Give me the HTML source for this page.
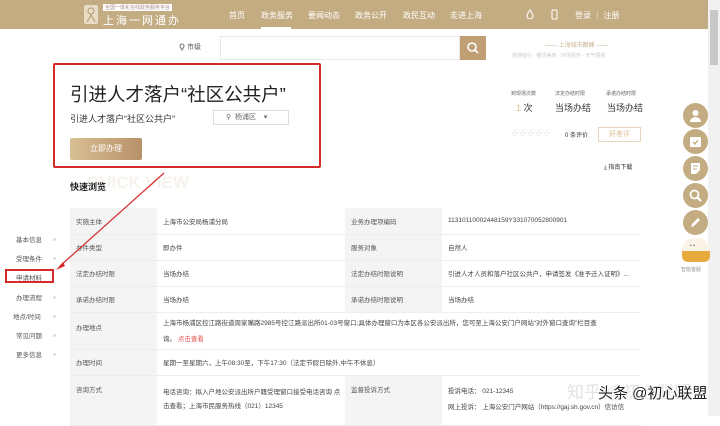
<!DOCTYPE html>
<html><head><meta charset="utf-8"><style>
*{margin:0;padding:0;box-sizing:border-box}
body{width:720px;height:416px;overflow:hidden;background:#fff;font-family:"Liberation Sans","Noto Sans CJK SC",sans-serif;color:#333;position:relative}
.a{position:absolute;white-space:nowrap}
.hdr{left:0;top:0;width:708px;height:29px;background:#c4ac82}
.nav{color:#fff;font-size:8px;top:10px}
table{border-collapse:collapse;position:absolute;left:70px;top:208px;font-size:6.5px;color:#444}
td{border-bottom:1px solid #eee;padding:0 0 0 6px;vertical-align:middle}
td.l{background:#f4f4f4;color:#555}
.circ{position:absolute;left:683px;width:25px;height:25px;border-radius:50%;background:#c4ac82}
.circ svg{position:absolute;left:6px;top:6px}
.ln{font-size:6.5px;color:#555;left:16px}
.dot{left:53px;width:3px;height:3px;border-radius:50%;background:#ddd}
</style></head><body>
<div class="a hdr"></div>
<div class="a" style="left:84px;top:5px;width:14px;height:19px;background:#e8dcc6;border-radius:2px"><svg width="14" height="19"><circle cx="7" cy="6" r="3" fill="none" stroke="#b39a70"/><path d="M3 17 L7 10 L11 17" fill="none" stroke="#b39a70"/></svg></div>
<div class="a" style="left:103px;top:4px;font-size:5px;background:#fff;color:#a88;padding:0 2px">全国一体化在线政务服务平台</div>
<div class="a" style="left:103px;top:12px;font-size:11px;color:#fff;letter-spacing:2px">上海一网通办</div>
<div class="a nav" style="left:229px">首页</div>
<div class="a nav" style="left:261px">政务服务</div>
<div class="a" style="left:261px;top:27px;width:30px;height:2px;background:#fff"></div>
<div class="a nav" style="left:308px">要闻动态</div>
<div class="a nav" style="left:355px">政务公开</div>
<div class="a nav" style="left:403px">政民互动</div>
<div class="a nav" style="left:450px">走进上海</div>
<svg class="a" style="left:526px;top:9px" width="8" height="10"><path d="M4 1 C2 4 1 5 1 7 A3 3 0 0 0 7 7 C7 5 6 4 4 1Z" fill="none" stroke="#fff"/></svg>
<svg class="a" style="left:551px;top:9px" width="7" height="11"><rect x="1" y="1" width="5" height="9" rx="1" fill="none" stroke="#fff"/></svg>
<div class="a nav" style="left:575px">登录 ｜ 注册</div>
<div class="a" style="left:708px;top:0;width:12px;height:416px;background:#f1f1f1"></div>
<div class="a" style="left:710px;top:10px;width:8px;height:55px;background:#c8c8c8"></div>
<svg class="a" style="left:179px;top:43px" width="6" height="8"><path d="M3 7 C1 4 1 3 1 3 A2 2 0 0 1 5 3 C5 3 5 4 3 7Z" fill="none" stroke="#777"/></svg>
<div class="a" style="left:187px;top:42px;font-size:7px;color:#555">市级</div>
<div class="a" style="left:220px;top:36px;width:240px;height:24px;border:1px solid #e8e8e8"></div>
<div class="a" style="left:460px;top:36px;width:26px;height:24px;background:#c09f75"><svg width="26" height="24"><circle cx="12" cy="11" r="4" fill="none" stroke="#fff" stroke-width="1.6"/><line x1="15" y1="14" x2="18" y2="17" stroke="#fff" stroke-width="1.6"/></svg></div>
<div class="a" style="left:545px;top:40px;font-size:6px;color:#c8b28c">—— 上海城市巅峰 ——</div>
<div class="a" style="left:512px;top:52px;font-size:5px;color:#ccc">旅游指引 · 餐饮美食 · 环境服务 · 天气预报</div>
<div class="a" style="left:53px;top:63px;width:268px;height:105px;border:2px solid #d42a2a;border-radius:2px"></div>
<div class="a" style="left:70px;top:81px;font-size:18.5px;color:#222">引进人才落户“社区公共户”</div>
<div class="a" style="left:70px;top:112px;font-size:9px;color:#333">引进人才落户“社区公共户”</div>
<div class="a" style="left:213px;top:110px;width:76px;height:15px;border:1px solid #ddd;font-size:7px;color:#666;line-height:13px;padding-left:12px">⚲ &nbsp;杨浦区 &nbsp;&nbsp;&nbsp;▾</div>
<div class="a" style="left:70px;top:138px;width:72px;height:22px;background:linear-gradient(90deg,#d9bf95,#b8916a);border-radius:2px;color:#fff;font-size:8px;text-align:center;line-height:22px">立即办理</div>
<div class="a" style="left:86px;top:173px;font-size:17px;color:#f6f2ec;font-weight:bold">QUICK VIEW</div>
<div class="a" style="left:70px;top:180px;font-size:9px;color:#222;font-weight:bold">快速浏览</div>
<div class="a" style="left:511px;top:90px;font-size:5px;color:#666">到现场次数</div>
<div class="a" style="left:555px;top:90px;font-size:5px;color:#666">法定办结时限</div>
<div class="a" style="left:606px;top:90px;font-size:5px;color:#666">承诺办结时限</div>
<div class="a" style="left:516px;top:101px;font-size:9px;color:#333"><span style="color:#d9bf95">1</span> 次</div>
<div class="a" style="left:555px;top:101px;font-size:9px;color:#333">当场办结</div>
<div class="a" style="left:607px;top:101px;font-size:9px;color:#333">当场办结</div>
<div class="a" style="left:511px;top:128px;font-size:8px;color:#ddd">☆☆☆☆☆</div>
<div class="a" style="left:565px;top:130px;font-size:6px;color:#333">0 条评价</div>
<div class="a" style="left:598px;top:127px;width:43px;height:15px;border:1px solid #e3d5bd;font-size:7px;color:#d9bf95;text-align:center;line-height:13px">好差评</div>
<div class="a" style="left:604px;top:162px;font-size:6px;color:#333">⤓ 指南下载</div>
<table style="width:571px">
<tr style="height:26px"><td class="l" style="width:87px">实施主体</td><td style="width:188px">上海市公安局杨浦分局</td><td class="l" style="width:97px">业务办理项编码</td><td>11310110002448159Y331070052800901</td></tr>
<tr style="height:26px"><td class="l">办件类型</td><td>即办件</td><td class="l">服务对象</td><td>自然人</td></tr>
<tr style="height:26px"><td class="l">法定办结时限</td><td>当场办结</td><td class="l">法定办结时限说明</td><td>引进人才人员和落户社区公共户，申请签发《准予迁入证明》...</td></tr>
<tr style="height:26px"><td class="l">承诺办结时限</td><td>当场办结</td><td class="l">承诺办结时限说明</td><td>当场办结</td></tr>
<tr style="height:37px"><td class="l" style="vertical-align:top;padding-top:9px">办理地点</td><td colspan="3" style="line-height:16px;padding-top:2px">上海市杨浦区控江路街道周家嘴路2985号控江路派出所01-03号窗口;具体办理窗口为本区各公安派出所，您可至上海公安门户网站“对外窗口查询”栏目查<br>询。 <span style="color:#e05050">点击查看</span></td></tr>
<tr style="height:26px"><td class="l">办理时间</td><td colspan="3">星期一至星期六，上午08:30至，下午17:30（法定节假日除外,中午不休息）</td></tr>
<tr style="height:50px"><td class="l" style="vertical-align:top;padding-top:8px">咨询方式</td><td style="line-height:14px">电话咨询：拟入户地公安派出所户籍受理窗口接受电话咨询 点<br>击查看；上海市民服务热线（021）12345</td><td class="l" style="vertical-align:top;padding-top:8px">监督投诉方式</td><td style="line-height:16px">投诉电话： 021-12345<br>网上投诉： 上海公安门户网站（https://gaj.sh.gov.cn）信访信</td></tr>
</table>
<div class="a ln" style="top:234px">基本信息</div><div class="a dot" style="top:238px"></div>
<div class="a ln" style="top:253px">受理条件</div><div class="a dot" style="top:257px"></div>
<div class="a" style="left:5px;top:269px;width:49px;height:14px;border:2px solid #d42a2a"></div>
<div class="a ln" style="top:272px">申请材料</div>
<div class="a ln" style="top:292px">办理流程</div><div class="a dot" style="top:296px"></div>
<div class="a" style="left:13px;top:311px;font-size:6.5px;color:#555">地点/时间</div><div class="a dot" style="top:315px"></div>
<div class="a ln" style="top:330px">常见问题</div><div class="a dot" style="top:334px"></div>
<div class="a ln" style="top:349px">更多信息</div><div class="a dot" style="top:353px"></div>
<svg class="a" style="left:0;top:0" width="720" height="416"><line x1="164" y1="173" x2="60" y2="266" stroke="#d42a2a" stroke-width="1.2"/><polygon points="56,270 63,262 65,266" fill="#d42a2a"/></svg>
<div class="circ" style="top:103px"><svg width="13" height="13"><circle cx="6.5" cy="4" r="3" fill="#fff"/><path d="M1 13 A5.5 5 0 0 1 12 13Z" fill="#fff"/></svg></div>
<div class="circ" style="top:129px"><svg width="13" height="13"><rect x="1" y="2" width="11" height="10" rx="1" fill="#fff"/><path d="M4 7 L6 9 L9 5" stroke="#c4ac82" fill="none" stroke-width="1.3"/></svg></div>
<div class="circ" style="top:156px"><svg width="13" height="13"><path d="M2 1 H11 V8 L7 12 H2Z" fill="#fff"/><line x1="4" y1="4" x2="9" y2="4" stroke="#c4ac82"/><line x1="4" y1="7" x2="8" y2="7" stroke="#c4ac82"/></svg></div>
<div class="circ" style="top:183px"><svg width="13" height="13"><circle cx="5.5" cy="5.5" r="4" fill="none" stroke="#fff" stroke-width="1.8"/><line x1="8.5" y1="8.5" x2="12" y2="12" stroke="#fff" stroke-width="2"/></svg></div>
<div class="circ" style="top:210px"><svg width="13" height="13"><path d="M2 11 L3 8 L9 2 L11 4 L5 10Z" fill="#fff"/></svg></div>
<div class="a" style="left:682px;top:238px;width:28px;height:24px;border-radius:12px 12px 6px 6px;background:linear-gradient(#fbf3e8 55%,#e8a93d 55%)"></div>
<div class="a" style="left:690px;top:243px;font-size:5px;color:#555">• •</div>
<div class="a" style="left:681px;top:266px;font-size:5px;color:#999">智能客服</div>
<div class="a" style="left:567px;top:378px;font-size:17px;color:#e3e3e3">知乎 @初心联盟</div>
<div class="a" style="left:598px;top:382px;font-size:15px;color:#222;text-shadow:0 0 2px #fff,0 0 2px #fff">头条 @初心联盟</div>
</body></html>
